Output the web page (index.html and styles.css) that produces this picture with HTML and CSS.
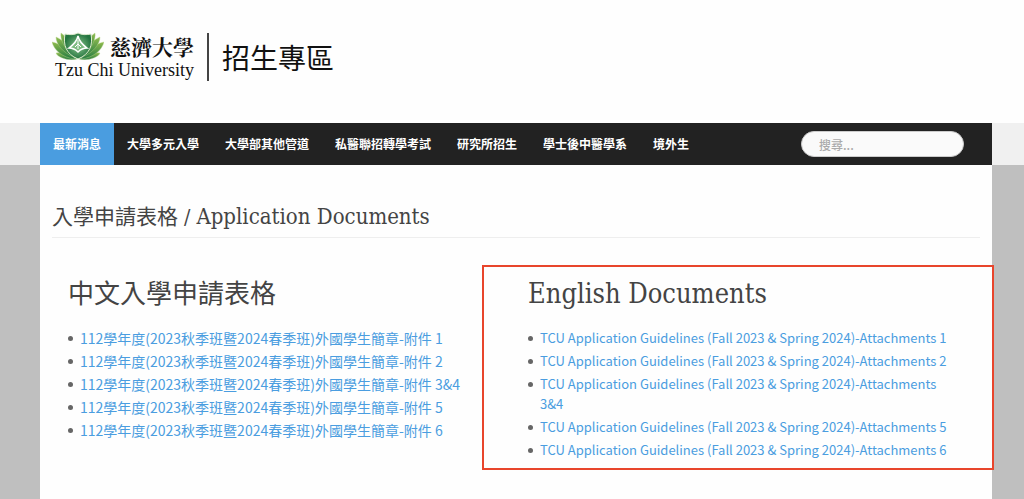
FILE: index.html
```html
<!DOCTYPE html>
<html lang="zh-Hant">
<head>
<meta charset="utf-8">
<title>入學申請表格 / Application Documents</title>
<link rel="stylesheet" href="styles.css">
</head>
<body>
<header class="header">
<a class="logo" href="#">
<span class="school">
<span class="school-top">
<svg class="emblem" viewBox="0 0 52 28" aria-hidden="true">
<defs>
<linearGradient id="leaf" x1="0" y1="0" x2="0" y2="1">
<stop offset="0" stop-color="#8fbb4d"/>
<stop offset="1" stop-color="#237a43"/>
</linearGradient>
<radialGradient id="shield">
<stop offset="0" stop-color="#8cc58c"/>
<stop offset="1" stop-color="#23743f"/>
</radialGradient>
</defs>
<g id="leaves" fill="url(#leaf)" stroke="#b5d58a" stroke-width=".4">
<path d="M25 27C17 29 6 26 4 21C12 20 20 23 25 27Z"/>
<path d="M23 27C11 26 2 18 0 10C10 12 19 19 23 27Z"/>
<path d="M22 25C11 21 4 12 4 5C13 9 20 16 22 25Z"/>
<path d="M20 22C12 16 8 7 9 1C16 6 20 13 20 22Z"/>
</g>
<use href="#leaves" transform="matrix(-1 0 0 1 52 0)"/>
<path d="M26 1C22 3 18 3 13 2C11 13 14 22 26 27C38 22 41 13 39 2C34 3 30 3 26 1Z" fill="url(#shield)" stroke="#dceacb"/>
<path d="M26 4C25 9 21 13 17 16C21 16 24 18 26 20C28 18 31 16 35 16C31 13 27 9 26 4Z" fill="#7dba80" stroke="#fff" stroke-width="1.5"/>
<path d="M26 8V17M23 15L26 12L29 15" fill="none" stroke="#fff"/>
</svg>
<span class="school-zh">慈濟大學</span>
</span>
<span class="school-en">Tzu Chi University</span>
</span>
<span class="site-name">招生專區</span>
</a>
</header>

<div class="strip">
<nav class="nav">
<ul class="menu">
<li><a class="active" href="#">最新消息</a></li>
<li><a href="#">大學多元入學</a></li>
<li><a href="#">大學部其他管道</a></li>
<li><a href="#">私醫聯招轉學考試</a></li>
<li><a href="#">研究所招生</a></li>
<li><a href="#">學士後中醫學系</a></li>
<li><a href="#">境外生</a></li>
</ul>
<form class="search">
<input type="search" placeholder="搜尋..." aria-label="搜尋">
</form>
</nav>
</div>

<main class="content">
<h1>入學申請表格 / <span lang="en">Application Documents</span></h1>
<div class="columns">
<section class="docs">
<h2>中文入學申請表格</h2>
<ul>
<li><a href="#">112學年度(2023秋季班暨2024春季班)外國學生簡章-附件 1</a></li>
<li><a href="#">112學年度(2023秋季班暨2024春季班)外國學生簡章-附件 2</a></li>
<li><a href="#">112學年度(2023秋季班暨2024春季班)外國學生簡章-附件 3&amp;4</a></li>
<li><a href="#">112學年度(2023秋季班暨2024春季班)外國學生簡章-附件 5</a></li>
<li><a href="#">112學年度(2023秋季班暨2024春季班)外國學生簡章-附件 6</a></li>
</ul>
</section>
<section class="docs marked" lang="en">
<h2>English Documents</h2>
<ul>
<li><a href="#">TCU Application Guidelines (Fall 2023 &amp; Spring 2024)-Attachments 1</a></li>
<li><a href="#">TCU Application Guidelines (Fall 2023 &amp; Spring 2024)-Attachments 2</a></li>
<li><a href="#">TCU Application Guidelines (Fall 2023 &amp; Spring 2024)-Attachments 3&amp;4</a></li>
<li><a href="#">TCU Application Guidelines (Fall 2023 &amp; Spring 2024)-Attachments 5</a></li>
<li><a href="#">TCU Application Guidelines (Fall 2023 &amp; Spring 2024)-Attachments 6</a></li>
</ul>
</section>
</div>
</main>
</body>
</html>
```
FILE: styles.css
```css
* {
    box-sizing: border-box;
}
body {
    display: flex;
    flex-direction: column;
    min-height: 100vh;
    margin: 0;
    background-color: #bfbfbf;
    font-family: "Noto Sans CJK TC", sans-serif;
    font-size: 14px;
    color: #666;
}
a {
    color: #4a9de0;
    text-decoration: none;
}
ul {
    margin: 0;
    padding: 0;
    list-style: none;
}
.header {
    padding: 32px 52px 41px;
    background-color: #fefefe;
}
.logo {
    display: inline-flex;
    align-items: center;
    height: 50px;
    color: #111;
}
.school {
    display: flex;
    flex-direction: column;
    padding-right: 13px;
    border-right: 2px solid #444;
}
.school-top {
    display: flex;
    align-items: center;
    gap: 6px;
    height: 26px;
}
.emblem {
    width: 52px;
    height: 28px;
}
.school-zh {
    font-family: "Noto Serif CJK TC", "Noto Sans CJK TC", serif;
    font-size: 21px;
    font-weight: bold;
    line-height: 24px;
}
.school-en {
    padding-left: 3px;
    font-family: "Liberation Serif", serif;
    font-size: 18px;
    line-height: 22px;
}
.site-name {
    padding-left: 13px;
    font-size: 28px;
    line-height: 42px;
}

.strip {
    padding: 0 32px 0 40px;
    background-color: #f0f0f0;
}
.nav {
    display: flex;
    align-items: center;
    justify-content: space-between;
    padding-right: 28px;
    background-color: #222;
}
.menu {
    display: flex;
}
.menu a {
    display: block;
    padding: 0 13px;
    font-size: 12px;
    font-weight: bold;
    line-height: 42px;
    color: #fff;
}
.menu a.active {
    background-color: #4a9de0;
}
.search input {
    display: block;
    width: 163px;
    height: 26px;
    padding: 0 17px;
    border: 1px solid #ccc;
    border-radius: 13px;
    background-color: #fafafa;
    font-family: "Noto Sans CJK TC", sans-serif;
    font-size: 12px;
    font-weight: 500;
}
.search input::placeholder {
    color: #aaa;
}

.content {
    flex: 1;
    margin: 0 32px 0 40px;
    padding-top: 32px;
    background-color: #fefefe;
}
h1, h2 {
    margin: 0;
    font-family: "DejaVu Serif Condensed", "Noto Sans CJK TC", serif;
    font-weight: normal;
    line-height: 40px;
    color: #444;
}
h1 {
    margin: 0 12px 27px;
    border-bottom: 1px solid #eee;
    font-size: 21px;
}
h1 span {
    font-size: 22px;
}
h2 {
    margin-bottom: 14px;
    font-size: 26px;
}
h2:lang(en) {
    font-size: 27px;
}
.columns {
    display: grid;
    grid-template-columns: 442fr 512fr;
    margin-right: -2px;
}
.docs {
    padding: 7px 12px 5px 26px;
    border: 2px solid transparent;
}
.docs.marked {
    padding-right: 38px;
    padding-left: 44px;
    border-color: #e8452c;
}
.docs li {
    display: flex;
    gap: 7px;
    margin-bottom: 3px;
    line-height: 20px;
}
.docs li:lang(en) {
    font-size: 13px;
}
.docs li::before {
    content: "";
    flex: none;
    width: 5px;
    height: 5px;
    margin-top: 8px;
    border-radius: 50%;
    background-color: #666;
}
```
